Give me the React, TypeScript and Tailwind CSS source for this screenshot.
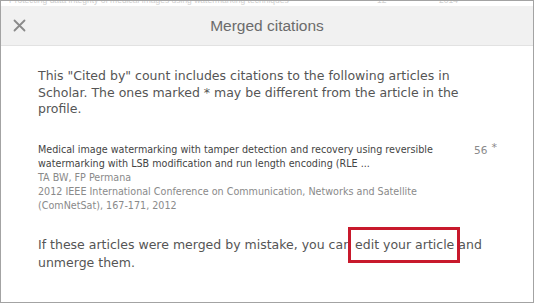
import React from "react";

export default function App() {
  return (
    <div className="w-[536px] h-[304px] bg-white overflow-hidden" style={{ fontFamily: '"DejaVu Sans", Verdana, sans-serif' }}>
      <div className="w-[534px] h-[303px] border border-[#a3a3a3] flex flex-col">
        <div className="h-[5px] overflow-hidden">
          <div className="-mt-[6px] pl-[8px] text-[8.5px] leading-[10px] text-[#cfcfcf] whitespace-nowrap flex" style={{ fontFamily: '"Liberation Sans", Arial, sans-serif' }}>
            <span className="w-[368px]">Protecting data integrity of medical images using watermarking techniques</span>
            <span className="w-[62px]">12</span>
            <span>2014</span>
          </div>
        </div>
        <div className="h-[40px] bg-[#f1f1f1] border-b border-[#e2e2e2] flex items-center relative shrink-0">
          <svg className="absolute left-[12px] top-[13px]" width="13" height="13" viewBox="0 0 13 13">
            <path d="M1.5 1.5 L11.5 11.5 M11.5 1.5 L1.5 11.5" stroke="#8a8a8a" strokeWidth="1.8" strokeLinecap="round" />
          </svg>
          <div className="w-full text-center text-[15.5px] text-[#6b6b6b]" style={{ fontFamily: '"Liberation Sans", Arial, sans-serif' }}>Merged citations</div>
        </div>
        <div className="pl-[37px] pt-[22px]">
          <p className="w-[460px] text-[12.5px] leading-[16.5px] text-[#555]">
            This "Cited by" count includes citations to the following articles in Scholar. The ones marked * may be different from the article in the profile.
          </p>
          <div className="mt-[25px] flex">
            <div className="w-[430px] text-[9.6px] leading-[14px]">
              <div className="text-[#444]">
                Medical image watermarking with tamper detection and recovery using reversible watermarking with LSB modification and run length encoding (RLE ...
              </div>
              <div className="text-[#8a8a8a]">TA BW, FP Permana</div>
              <div className="text-[#8a8a8a]">
                2012 IEEE International Conference on Communication, Networks and Satellite (ComNetSat), 167-171, 2012
              </div>
            </div>
            <div className="ml-[6px] text-[10.5px] leading-[14px] text-[#8a8a8a] flex items-start">
              <span>56</span>
              <span className="ml-[4px] text-[11px] leading-[9px]">*</span>
            </div>
          </div>
          <p className="mt-[23px] w-[470px] text-[12.5px] leading-[18px] text-[#555]">
            If these articles were merged by mistake, you can{" "}
            <span className="relative">
              edit your article
              <span className="absolute -left-[7px] -right-[6px] -top-[10px] -bottom-[11px] border-[3px] border-[#c8192c]" />
            </span>{" "}
            and unmerge them.
          </p>
        </div>
      </div>
    </div>
  );
}
